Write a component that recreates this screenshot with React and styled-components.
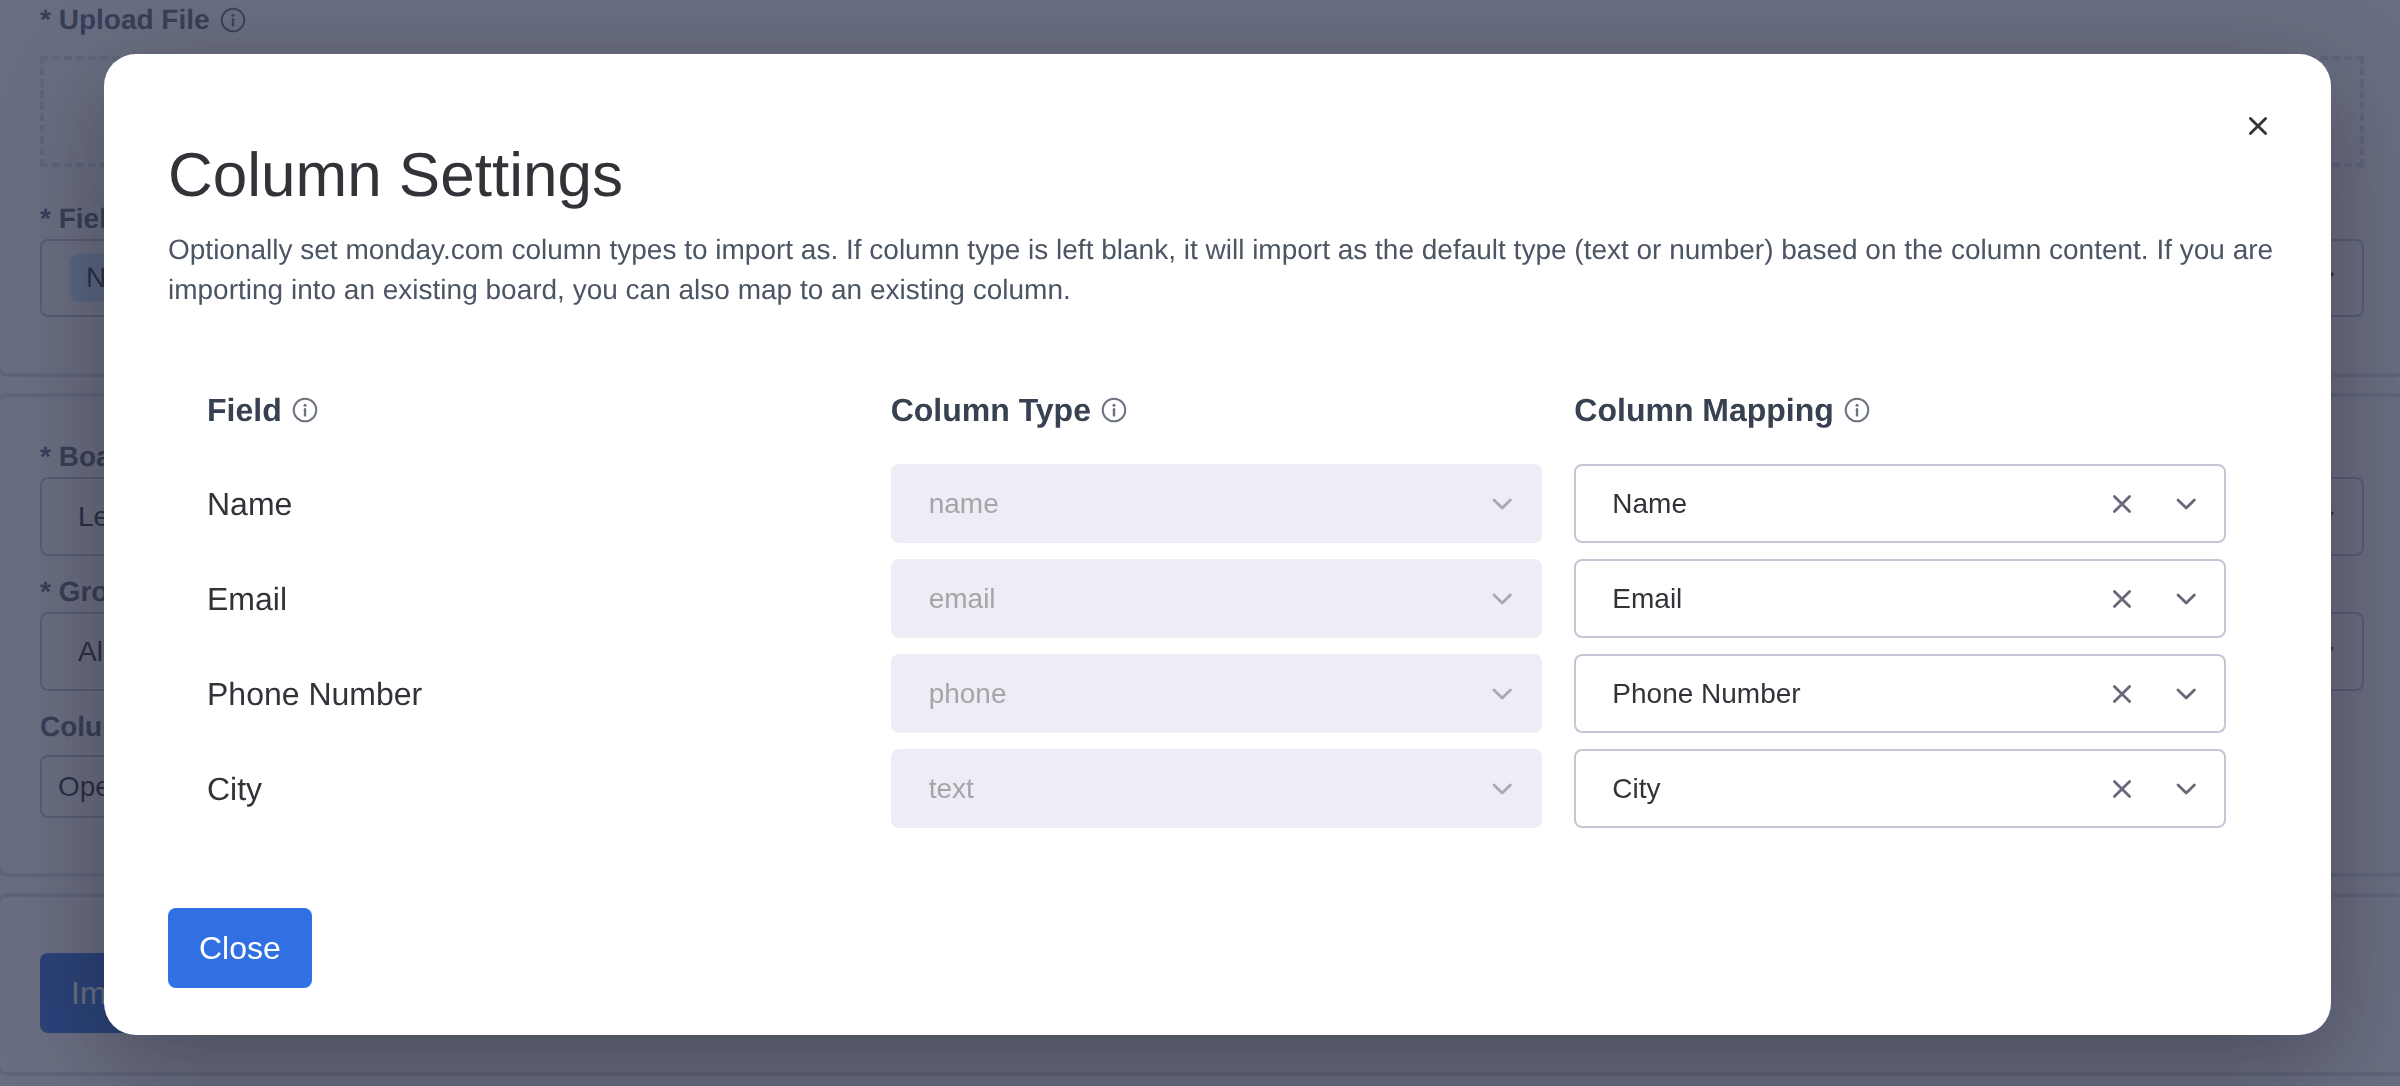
import React, { useId } from "react";
import styled, { createGlobalStyle } from "styled-components";

const GlobalStyle = createGlobalStyle`
  *, *::before, *::after { box-sizing: border-box; }
  html { overflow: hidden; }
  body {
    margin: 0;
    background: #fff;
    color: #323338;
    font-family: "Liberation Sans", Arial, Helvetica, sans-serif;
    font-size: 28px;
    line-height: 40px;
    text-rendering: geometricPrecision;
  }
  button, input, select { font: inherit; }
`;

const Page = styled.main`
  display: flex;
  flex-direction: column;
  gap: 16px;
  height: 100vh;
  overflow: hidden;
`;

const Card = styled.section`
  flex: none;
  margin: 0 -8px 0 -4px;
  padding: ${(p) => p.$padding};
  border: 4px solid #e0e1e8;
  border-top-width: ${(p) => (p.$continued ? 0 : 4)}px;
  border-radius: ${(p) => (p.$continued ? "0 0 12px 12px" : "12px")};
`;

const FieldGroup = styled.div`
  display: flex;
  flex-direction: column;
  margin-bottom: ${(p) => p.$space || 0}px;
`;

const FormLabel = styled.label`
  display: flex;
  align-items: center;
  gap: 10px;
  height: 40px;
  color: #5f6375;
  font-weight: 700;
`;

const DropZone = styled.div`
  height: 111px;
  margin: 16px 0 32px;
  border: 4px dashed #dfe1ea;
`;

const TagBox = styled.div`
  display: flex;
  align-items: center;
  justify-content: space-between;
  height: 78px;
  padding: 0 26px 0 28px;
  border: 2px solid #c3c6d4;
  border-radius: 8px;
`;

const Tag = styled.span`
  height: 48px;
  padding: 4px 16px;
  border-radius: 8px;
  background: #cce5ff;
`;

const OutlineButton = styled.button`
  height: 63px;
  margin-top: 8px;
  padding: 0 16px;
  border: 2px solid #c3c6d4;
  border-radius: 8px;
  background: transparent;
  color: #323338;
  align-self: flex-start;
`;

const PrimaryButton = styled.button`
  height: 80px;
  padding: 0 31px;
  border: 0;
  border-radius: 8px;
  background: #3070e2;
  color: #fff;
  font-size: 32px;
`;

const SelectBox = styled.div`
  position: relative;
  display: flex;
  align-items: center;
  height: 79px;
  border: 2px solid ${(p) => (p.$disabled ? "#ecedf5" : "#c3c6d4")};
  border-radius: 8px;
  background: ${(p) => (p.$disabled ? "#ecedf5" : "transparent")};
`;

const NativeSelect = styled.select`
  flex: 1;
  min-width: 0;
  height: 100%;
  padding: 0 120px 0 36px;
  border: 0;
  background: transparent;
  color: #323338;
  appearance: none;
  &:disabled { color: #a5a5a9; opacity: 1; }
`;

const SelectIcons = styled.div`
  position: absolute;
  right: 26px;
  display: flex;
  align-items: center;
  gap: 40px;
  color: ${(p) => (p.$disabled ? "#a9a9ae" : "#676879")};
  pointer-events: none;
`;

const IconButton = styled.button`
  display: flex;
  padding: 0;
  border: 0;
  background: transparent;
  color: inherit;
  pointer-events: auto;
`;

const Backdrop = styled.div`
  position: fixed;
  inset: 0;
  padding: 54px 69px 50px 104px;
  background: rgba(41, 47, 76, 0.7);
`;

const Dialog = styled.section`
  position: relative;
  padding: 84px 52px 47px 64px;
  border-radius: 32px;
  background: #fff;
  box-shadow: 0 30px 100px rgba(0, 0, 0, 0.3);
`;

const DialogClose = styled(IconButton)`
  position: absolute;
  top: 60px;
  right: 61px;
`;

const Title = styled.h1`
  margin: 0;
  font-size: 62px;
  font-weight: 400;
  line-height: 76px;
`;

const Description = styled.p`
  margin: 16px 0 0;
  color: #4b5563;
`;

const SettingsTable = styled.table`
  display: block;
  margin: 80px 53px 0 39px;

  thead, tbody { display: grid; }
  tbody { gap: 16px; margin-top: 34px; }
`;

const TableRow = styled.tr`
  display: grid;
  grid-template-columns: repeat(3, minmax(0, 1fr));
  column-gap: 32px;
  align-items: center;
  font-size: 32px;
`;

const HeadCell = styled.th`
  display: flex;
  align-items: center;
  gap: 10px;
  padding: 0;
  color: #374151;
  text-align: left;
`;

const NameCell = styled.th`
  padding: 0;
  font-weight: 400;
  text-align: left;
`;

const Cell = styled.td`
  padding: 0;
  font-size: 28px;
`;

const DialogFooter = styled.footer`
  display: flex;
  margin-top: 80px;
`;

function InfoIcon() {
  return (
    <svg width="26" height="26" viewBox="0 0 26 26" fill="none" stroke="#6b7280" strokeWidth="2" aria-hidden="true">
      <circle cx="13" cy="13" r="11.3" />
      <path d="M13 12.2v6.2" strokeWidth="2.4" strokeLinecap="round" />
      <circle cx="13" cy="8.2" r="1.5" fill="#6b7280" stroke="none" />
    </svg>
  );
}

function CrossIcon() {
  return (
    <svg width="24" height="24" viewBox="0 0 24 24" fill="none" stroke="currentColor" strokeWidth="2.8" strokeLinecap="round" aria-hidden="true">
      <path d="M4.4 4.4l15.2 15.2M19.6 4.4L4.4 19.6" />
    </svg>
  );
}

function ChevronIcon() {
  return (
    <svg width="24" height="24" viewBox="0 0 24 24" fill="none" stroke="currentColor" strokeWidth="2.8" strokeLinecap="round" strokeLinejoin="round" aria-hidden="true">
      <path d="M4 8l8.2 8 8.2-8" />
    </svg>
  );
}

function Select({ id, label, value, disabled, clearable }) {
  return (
    <SelectBox $disabled={disabled}>
      <NativeSelect id={id} aria-label={label} defaultValue={value} disabled={disabled}>
        <option>{value}</option>
      </NativeSelect>
      <SelectIcons $disabled={disabled}>
        {clearable && (
          <IconButton type="button" aria-label={`Clear ${label}`}>
            <CrossIcon />
          </IconButton>
        )}
        <ChevronIcon />
      </SelectIcons>
    </SelectBox>
  );
}

function SelectField({ label, value, space }) {
  const id = useId();
  return (
    <FieldGroup $space={space}>
      <FormLabel htmlFor={id}>{label}</FormLabel>
      <Select id={id} label={label} value={value} />
    </FieldGroup>
  );
}

const headings = ["Field", "Column Type", "Column Mapping"];

const rows = [
  { field: "Name", type: "name" },
  { field: "Email", type: "email" },
  { field: "Phone Number", type: "phone" },
  { field: "City", type: "text" },
];

function ImportForm() {
  return (
    <Page>
      <Card $continued $padding="0 40px 56px 40px">
        <FormLabel as="div">
          * Upload File <InfoIcon />
        </FormLabel>
        <DropZone />
        <FormLabel as="div">* Fields</FormLabel>
        <TagBox>
          <Tag>Name</Tag>
          <ChevronIcon />
        </TagBox>
      </Card>
      <Card $padding="40px 40px 55px 40px">
        <SelectField label="* Board" value="Leads" space={16} />
        <SelectField label="* Group" value="All" space={16} />
        <FieldGroup>
          <FormLabel as="div">Columns</FormLabel>
          <OutlineButton type="button">Open</OutlineButton>
        </FieldGroup>
      </Card>
      <Card $padding="56px 40px 39px 40px">
        <PrimaryButton type="button">Import</PrimaryButton>
      </Card>
    </Page>
  );
}

function ColumnSettingsDialog() {
  return (
    <Backdrop>
      <Dialog role="dialog" aria-modal="true" aria-labelledby="dialog-title">
        <DialogClose type="button" aria-label="Close dialog">
          <CrossIcon />
        </DialogClose>
        <Title id="dialog-title">Column Settings</Title>
        <Description>
          Optionally set monday.com column types to import as. If column type is left blank, it will import as the
          default type (text or number) based on the column content. If you are importing into an existing board, you
          can also map to an existing column.
        </Description>
        <SettingsTable>
          <thead>
            <TableRow>
              {headings.map((heading) => (
                <HeadCell key={heading} scope="col">
                  {heading} <InfoIcon />
                </HeadCell>
              ))}
            </TableRow>
          </thead>
          <tbody>
            {rows.map(({ field, type }) => (
              <TableRow key={field}>
                <NameCell scope="row">{field}</NameCell>
                <Cell>
                  <Select label={`${field} column type`} value={type} disabled />
                </Cell>
                <Cell>
                  <Select label={`${field} column mapping`} value={field} clearable />
                </Cell>
              </TableRow>
            ))}
          </tbody>
        </SettingsTable>
        <DialogFooter>
          <PrimaryButton type="button">Close</PrimaryButton>
        </DialogFooter>
      </Dialog>
    </Backdrop>
  );
}

export default function App() {
  return (
    <>
      <GlobalStyle />
      <ImportForm />
      <ColumnSettingsDialog />
    </>
  );
}
